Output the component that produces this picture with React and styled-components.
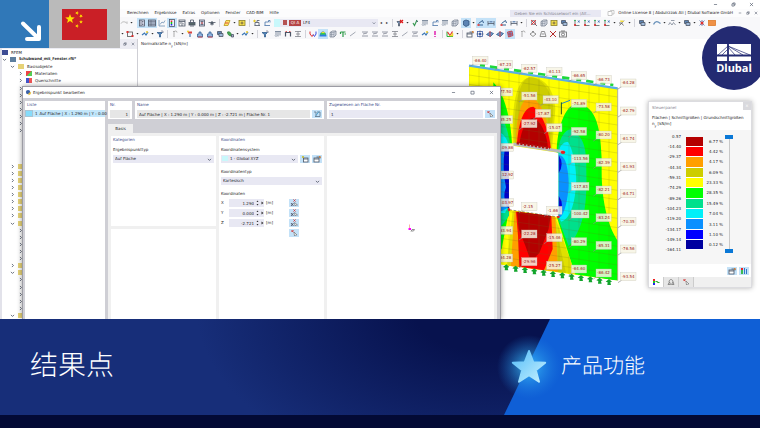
import React from "react";
import styled, { createGlobalStyle, css } from "styled-components";

const colors = {
  ink: "#1c1c26",
  muted: "#85858f",
  heading: "#3a4a88",
  field: "#e8e8f3",
  readonly: "#e6e6e6",
  highlight: "#c4e2f8",
  chrome: "#cfcfd5",
  surface: "#f0f0f0",
  bar: "#f8f8fa",
  folder: "#e6d277",
  navy: "#232a72"
};

const GlobalStyle = createGlobalStyle`
  *, *::before, *::after { box-sizing: border-box; }
  body { margin: 0; }
  body, button, input, select {
    font-family: "DejaVu Sans", "Noto Sans CJK SC", sans-serif;
    font-size: 4px;
    line-height: 6px;
    color: ${colors.ink};
    text-rendering: geometricPrecision;
  }
  button, input, select { margin: 0; padding: 0; border: 0; border-radius: 0; }
  a { color: inherit; text-decoration: none; }
`;

const Page = styled.div`
  display: flex;
  flex-direction: column;
  min-height: 100vh;
  overflow: hidden;
  background: #fff;
`;

const Stage = styled.div`
  position: relative;
  flex: 1;
  display: flex;
  flex-direction: column;
  overflow: hidden;
`;

/* ---------- icons ---------- */

const Icon = styled.svg`
  display: block;
  flex: none;
  width: ${p => p.$size || 8}px;
  height: ${p => p.$size || 8}px;
  fill: none;
  stroke: #4c5566;
  stroke-width: 1.6;
`;

const glyphs = {
  undo: <path d="M2 9c2-4 8-5 12 0M14 9V5" stroke="#aaa" />,
  panel: (
    <>
      <rect x="3" y="2" width="10" height="12" fill="#eef" />
      <path d="M6 2v12M8 5h3M8 8h3M8 11h3" />
    </>
  ),
  table: (
    <>
      <rect x="1" y="2" width="14" height="12" fill="#b9c6dc" />
      <path d="M1 5h14M1 8h14M1 11h14M6 2v12" strokeWidth="1" />
    </>
  ),
  chart: <path d="M2 2v12h12M4 11l4-5 3 2 3-5" stroke="#6d8fb3" />,
  legend: (
    <>
      <rect x="3" y="1" width="10" height="14" fill="#eef" />
      <path d="M7 3v3" stroke="#e22" strokeWidth="3" />
      <path d="M7 6v4" stroke="#1c1" strokeWidth="3" />
      <path d="M7 10v3" stroke="#22e" strokeWidth="3" />
    </>
  ),
  report: (
    <>
      <rect x="2" y="2" width="12" height="12" />
      <path d="M2 5h12M4 8h5l3 3M6 12h4" />
    </>
  ),
  print: (
    <>
      <rect x="2" y="7" width="12" height="5" fill="#566" />
      <path d="M5 7V2h6v5M4 14h8" />
    </>
  ),
  book: (
    <>
      <rect x="3" y="2" width="10" height="12" fill="#dde" />
      <path d="M5 5h6M5 11h6" />
      <circle cx="8" cy="8" r="1" fill="#a33" stroke="#a33" />
    </>
  ),
  drone: (
    <>
      <path d="M1 7h14M4 10h8M8 4v9" />
      <circle cx="8" cy="8" r="2" fill="#566" />
    </>
  ),
  pencil: (
    <>
      <path d="M2 13L6 3h8l-4 10z" fill="#ffe36b" stroke="#b99a1c" />
      <path d="M4 8h7" stroke="#d33" />
    </>
  ),
  yellow: (
    <>
      <rect x="2" y="3" width="12" height="10" fill="#f5e04c" stroke="#8b7f2a" />
      <path d="M5 8h6M8 5v6" stroke="#654" />
    </>
  ),
  newCase: (
    <>
      <path d="M3 13h11M4 13V7h8v6M8 7V3h5" />
      <circle cx="3" cy="4" r="1.6" fill="#f0d020" stroke="#e0c010" />
    </>
  ),
  editCase: <path d="M3 13h11M4 13V6M4 6h7V3h3v4" stroke="#4a74a8" />,
  funnelX: (
    <>
      <path d="M2 5h8l-3 4v5H5V9z" fill="#7aa6d0" />
      <path d="M8 2l6 6M14 2L8 8" stroke="#e01818" strokeWidth="2.4" />
    </>
  ),
  funnel: (
    <>
      <path d="M2 5h11L9 9v5H7V9z" fill="#4f84bb" stroke="#35608f" />
      <path d="M10 2h4v4" stroke="#889" />
    </>
  ),
  loads: <path d="M2 3h12M4 3v8M8 3v10M12 3v8M2 11l2 2 2-2" stroke="#6b7a8f" />,
  check: (
    <>
      <path d="M4 8l3 5 5-11" stroke="#3a9a55" strokeWidth="2.4" />
      <path d="M11 3l3 3" stroke="#346" />
    </>
  ),
  box: (
    <>
      <path d="M2 5l5-3h7v8l-4 4H2z" fill="#d5d9e2" stroke="#7d8796" />
      <path d="M2 5h8v9M10 5l4-3M5 5v9M2 9h8" stroke="#7d8796" strokeWidth="1" />
    </>
  ),
  cube: <path d="M3 4l5-2 6 2v8l-6 3-5-3z" fill="#5c84b4" stroke="#35557f" />,
  node: (
    <>
      <path d="M3 12h9M3 9l8-6 2 5" stroke="#35608f" strokeWidth="2" />
      <rect x="1" y="10" width="4" height="4" fill="#e05050" stroke="none" />
    </>
  ),
  dims: (
    <>
      <path d="M2 4v9M14 4v9M2 9h12" />
      <path d="M5 4h6v3H5z" fill="#6f8fb8" stroke="none" />
    </>
  ),
  zoomX: (
    <>
      <circle cx="7" cy="7" r="4" />
      <path d="M10 10l4 4" />
      <path d="M2 2l10 9M12 2L2 12" stroke="#e01818" />
    </>
  ),
  axis: (
    <>
      <path d="M4 3v10h9" stroke="#566" />
      <circle cx="4" cy="3" r="1.6" fill="#18a33b" stroke="none" />
      <circle cx="4" cy="12" r="2" fill="#e02020" stroke="none" />
      <path d="M10 3l3 4M13 3l-3 4" stroke="#2a5fb0" />
    </>
  ),
  brush: (
    <>
      <path d="M3 13L12 3M2 8h5l4 5" stroke="#555" />
      <path d="M4 3h6l2 3H5z" fill="#f2dd3d" stroke="none" />
    </>
  ),
  views: (
    <>
      <path d="M3 3h8v6H3z" fill="#5c84b4" />
      <path d="M6 7h8v6H6z" fill="#9fb9d9" />
    </>
  ),
  curve: <path d="M1 11c4-9 9-6 14-2" stroke="#6b93bb" strokeWidth="2.6" />,
  tents: <path d="M1 12l3-5 4 5 3-5 4 5M6 3h7" stroke="#7d8796" />,
  atom: (
    <>
      <path d="M3 3l10 10M13 3L3 13M8 2v12" stroke="#5572ab" />
      <circle cx="8" cy="8" r="3" fill="#dd3333" stroke="none" />
    </>
  ),
  orange: <rect x="1" y="3" width="14" height="10" fill="#ef9146" stroke="#de7a2a" />,
  frame: (
    <>
      <rect x="3" y="4" width="10" height="9" stroke="#555" />
      <path d="M1 2h4v4H1zM11 10h4v4h-4z" fill="#d83030" stroke="none" />
    </>
  ),
  spark: (
    <>
      <path d="M2 10l5-4 3 4 4-6" stroke="#3d78b5" strokeWidth="2.4" />
      <circle cx="12" cy="4" r="2" fill="#efcb2b" stroke="none" />
    </>
  ),
  hook: <path d="M6 14V5a3 3 0 0 1 6 0M4 3h3" stroke="#999" />,
  arrowRed: (
    <>
      <path d="M8 14V7" stroke="#4776aa" strokeWidth="2.4" />
      <path d="M4 3h8v4H4z" fill="#d94141" stroke="none" />
      <circle cx="4" cy="3" r="2" fill="#f0d020" stroke="none" />
    </>
  ),
  stack: (
    <>
      <path d="M3 14V8h3V4h4v4h3v6z" fill="#8fb2dd" stroke="#3a6497" />
      <path d="M4 14h9" stroke="#d33" />
    </>
  ),
  leaf: (
    <>
      <path d="M3 4c6-2 8 4 8 8-5 0-8-3-8-8z" fill="#48a857" stroke="#2e7f3b" />
      <path d="M11 9h4v5h-4z" fill="#aac" />
    </>
  ),
  beam: <path d="M2 3h12M2 13h12M8 3v10M4 8h8" stroke="#80838c" />,
  hinge: (
    <>
      <path d="M3 13V5h10v8" strokeWidth="2.4" />
      <path d="M3 3h3M10 3h3" stroke="#d33" />
    </>
  ),
  forces: (
    <>
      <path d="M2 3v5l4 5 3-4" stroke="#e02828" strokeWidth="2" />
      <path d="M8 9l3 4 3-5V3" stroke="#3b4fe0" strokeWidth="2" />
    </>
  ),
  rainbow: (
    <>
      <path d="M1 13c0-5 3-10 7-10s7 5 7 10z" fill="#2c7fe0" stroke="none" />
      <path d="M2 9c3-6 9-6 12 0z" fill="#3ccf42" stroke="none" />
      <path d="M4 6c3-4 6-4 8 0z" fill="#efdf2e" stroke="none" />
    </>
  ),
  greenT: <path d="M3 4h10M8 3v11M3 4v4M11 8h3" stroke="#2d9a48" strokeWidth="2.4" />,
  slash: <path d="M2 12L13 4" stroke="#8d93a0" />,
  lines: <path d="M2 4h12M2 12h12M4 8l8-2" stroke="#7d8392" />,
  pin: <path d="M8 2v8M8 12v2" stroke="#e020b0" strokeWidth="3" />,
  vee: (
    <>
      <path d="M2 3v10h12" stroke="#2fb43c" strokeWidth="2" />
      <path d="M3 4l5 7 5-8" stroke="#e02a2a" strokeWidth="2.4" />
      <path d="M7 11h6V6" stroke="#efd52e" strokeWidth="3" />
    </>
  ),
  target: (
    <>
      <rect x="3" y="3" width="10" height="10" stroke="#3f5fa8" />
      <circle cx="8" cy="8" r="3" fill="#3f5fa8" stroke="none" />
      <path d="M8 1v3M8 12v3M1 8h3M12 8h3" />
    </>
  ),
  slab: (
    <>
      <path d="M1 9l7-5 7 3-6 6z" fill="#6d95c8" stroke="#35608f" />
      <path d="M8 2v12" stroke="#d33" />
    </>
  ),
  mesh: (
    <>
      <path d="M3 4l9-2 2 9-9 3z" fill="#7396d8" stroke="#c33" />
      <path d="M8 3v10M4 8h9" stroke="#c33" />
    </>
  ),
  ring: <path d="M8 4l6 4-6 5-6-5zM6 3h4" stroke="#777" />,
  cone: <path d="M5 3h6l3 10H2zM5 8h6" stroke="#777" />,
  cross: <path d="M2 2l12 12M14 2L2 14" stroke="#b52b2b" strokeWidth="2" />,
  camera: (
    <>
      <rect x="1" y="4" width="14" height="10" stroke="#666" />
      <circle cx="8" cy="9" r="3" stroke="#666" />
      <path d="M4 2h8" stroke="#666" />
    </>
  ),
  open: <path d="M2 13V5h8v8zM5 5l2-2h7v7h-4" fill="#fff" stroke="#999" strokeWidth="1" />,
  newItem: (
    <>
      <rect x="5" y="6" width="9" height="8" fill="#fff" />
      <path d="M5 8h9" />
      <path d="M2 2l4 4M6 2L2 6" stroke="#c6b92a" />
    </>
  ),
  editItem: (
    <>
      <rect x="2" y="6" width="10" height="8" fill="#fff" />
      <path d="M2 8h10M7 4h7v3" />
      <path d="M12 3h2v3" stroke="#d0803a" strokeWidth="2.4" />
    </>
  ),
  rename: (
    <>
      <path d="M2 4h4v9M8 4h6v9H4" stroke="#5d7488" />
      <path d="M6 11l6-8" stroke="#3a9acb" />
    </>
  ),
  pick: (
    <>
      <path d="M8 6l1 8 2-2 3 0z" fill="#fff" stroke="#666" strokeWidth="1.2" />
      <path d="M3 3l4 3M7 2L3 6" stroke="#d23a3a" strokeWidth="2" />
    </>
  ),
  pickAxis: (
    <>
      <path d="M9 7l1 7 2-2 3 0z" fill="#fff" stroke="#666" strokeWidth="1.2" />
      <path d="M2 8l5 6M7 8l-5 6" stroke="#445" strokeWidth="1.6" />
      <path d="M7 1l4 4M11 1L7 5" stroke="#d23a3a" strokeWidth="2" />
    </>
  ),
  scale: (
    <>
      <path d="M4 2v4" stroke="#e22" strokeWidth="4" />
      <path d="M4 6v4" stroke="#2c2" strokeWidth="4" />
      <path d="M4 10v4" stroke="#22e" strokeWidth="4" />
      <path d="M7 7h3l2 2h3" stroke="#3a3" strokeWidth="2.4" />
    </>
  ),
  balance: <path d="M2 13h5L5 8zM9 13h5l-2-5zM4 8c0-3 2-5 4-5s4 2 4 5" stroke="#777" />,
  bars: (
    <>
      <path d="M4 2v12" stroke="#3cba54" strokeWidth="4" />
      <path d="M9 2v12M13 4v10" stroke="#2f78c8" strokeWidth="2" />
      <path d="M4 2v4" stroke="#e22" strokeWidth="4" />
    </>
  )
};

const Glyph = ({ name, size }) => (
  <Icon viewBox="0 0 16 16" $size={size} aria-hidden="true">
    {glyphs[name]}
  </Icon>
);

const chevronPaths = {
  down: "M3 6l5 5 5-5",
  right: "M6 3l5 5-5 5"
};

const Chevron = ({ dir = "down", size = 5 }) => (
  <Icon viewBox="0 0 16 16" $size={size} aria-hidden="true">
    <path d={chevronPaths[dir]} strokeWidth="2.6" />
  </Icon>
);

const windowPaths = {
  min: "M3 8h10",
  max: "M3 4h10v9H3z",
  restore: "M3 6h7v7H3zM6 6V3h7v7h-3",
  close: "M3 3l10 10M13 3L3 13"
};

const WindowButton = styled.button`
  display: grid;
  place-items: center;
  width: ${p => p.$width}px;
  background: none;
`;

const WindowGlyph = ({ name, size = 5, width = 18 }) => (
  <WindowButton type="button" aria-label={name} $width={width}>
    <Icon viewBox="0 0 16 16" $size={size}>
      <path d={windowPaths[name]} strokeWidth="2" />
    </Icon>
  </WindowButton>
);

/* ---------- main window ---------- */

const TitleBar = styled.header`
  display: flex;
  justify-content: flex-end;
  height: 9px;
`;

const MenuBar = styled.nav`
  display: flex;
  align-items: center;
  gap: 6px;
  height: 8px;
  padding-left: 127px;
  white-space: nowrap;
  background: #fcfcfd;
`;

const SearchField = styled.input`
  width: 91px;
  height: 7px;
  margin-left: auto;
  padding-left: 4px;
  background: ${colors.field};

  &::placeholder {
    color: ${colors.muted};
    opacity: 1;
  }
`;

const Account = styled.div`
  display: flex;
  align-items: center;
  gap: 3px;
`;

const Toolbar = styled.div`
  display: flex;
  align-items: center;
  height: 11px;
  padding-left: ${p => p.$start}px;
  background: ${colors.bar};
`;

const Tool = styled.button`
  display: grid;
  place-items: center;
  flex: none;
  width: 10px;
  height: 10px;
  background: ${p => (p.$active ? colors.highlight : "none")};
`;

const Caret = styled.span`
  flex: none;
  width: 5px;
  height: 2px;
  background: #333;
  clip-path: polygon(20% 0, 80% 0, 50% 100%);
`;

const Divider = styled.span`
  flex: none;
  width: 1px;
  height: 8px;
  margin: 0 ${p => p.$space}px;
  background: #d3d3da;
`;

const Spacer = styled.span`
  flex: none;
  width: ${p => p.$width}px;
`;

const LoadCase = styled.label`
  display: flex;
  align-items: center;
  flex: none;
  gap: 2px;
  width: 104px;
  height: 8px;
  padding-right: 2px;
  background: linear-gradient(90deg, #c9f8fb 6px, ${colors.field} 6px);
  padding-left: 9px;
`;

const CaseColor = styled.span`
  width: 4px;
  height: 5px;
  background: #b55252;
`;

const CaseTag = styled.span`
  width: 12px;
  color: #fff;
  text-align: center;
  background: #b54545;
`;

const PlainSelect = styled.select`
  flex: 1;
  appearance: none;
  background: none;
`;

const Step = styled.button`
  width: 6px;
  background: none;
`;

// "*name" is a pressed tool, "v" a caret, "|" a divider, a number blank space
const renderTools = items =>
  items.map((item, i) => {
    if (item === "v") return <Caret key={i} />;
    if (item === "|") return <Divider key={i} $space={2} />;
    if (typeof item === "number") return <Spacer key={i} $width={item} />;
    const name = item.replace("*", "");
    return (
      <Tool key={i} type="button" aria-label={name} $active={item !== name}>
        <Glyph name={name} />
      </Tool>
    );
  });

const viewTools = [
  "undo", "v", 3, "*panel", "*table", "chart", "*legend", "report", "print", "book", "drone", "|",
  "pencil", "v", "yellow", "|", "newCase", "editCase", 2
];

const resultTools = [
  "|", "funnelX", "v", "check", "loads", "editCase", "loads", "box", 1, "*cube", "v", "*node", "*dims",
  3, "node", "dims", "v", "|", "zoomX", "box", "yellow", "views", 3, "axis", "axis", "axis", "axis",
  "v", "brush", "v", "|", "views", "v", "curve", "v", "tents", "v", "views", "v", "atom", "orange"
];

const modelTools = [
  "v", "frame", "v", "spark", "v", "funnel", "|", "hook", "v", "arrowRed", "stack", "stack", "views",
  "leaf", "v", "spark", "v", "|", "funnel", 3, "loads", "hinge", "beam", "|", "forces", "*rainbow", "box",
  "greenT", "slash", 2, "lines", "lines", "lines", "beam", "slash", "lines", "spark", "pin", "|",
  "vee", "v", "|", "editItem", "target", "slab", "slab", "*mesh", 3, "hook", "ring", "cone", "cross", "camera"
];

const menus = ["Berechnen", "Ergebnisse", "Extras", "Optionen", "Fenster", "CAD-BIM", "Hilfe"];

const Workspace = styled.main`
  flex: 1;
  display: flex;
  background: #fff;
`;

const Navigator = styled.aside`
  display: flex;
  flex-direction: column;
  width: 138px;
  border-left: 2px solid #e2e2ea;
  border-right: 1px solid ${colors.chrome};
`;

const NavigatorHeader = styled.div`
  display: flex;
  justify-content: flex-end;
  height: 10px;
  background: #ececf3;
`;

const Tree = styled.ul`
  flex: 1;
  display: grid;
  grid-template-rows: repeat(38, 1fr);
  margin: 0;
  padding: 0;
  list-style: none;
`;

const TreeRow = styled.li`
  display: flex;
  align-items: center;
  gap: 3px;
  padding-left: ${p => p.$level * 8}px;

  ${p =>
    p.$bold &&
    css`
      font-family: "Open Sans", sans-serif;
      font-weight: 700;
    `}
`;

const Swatch = styled.span`
  flex: none;
  width: 6px;
  height: 5px;
  background: ${p => p.$color};
`;

const folderRows = new Set([16, 17, 18, 19, 20, 21, 22, 23, 24, 30, 31, 37]);
const openRows = new Set([24, 31, 37]);

const treeHead = [
  { level: 0, text: "RFEM", color: "#3d4c94" },
  { level: 0, text: "Schubwand_mit_Fenster.rf6*", color: "#5d7f9f", dir: "down", bold: true },
  { level: 1, text: "Basisobjekte", color: colors.folder, dir: "down" },
  { level: 2, text: "Materialien", color: "linear-gradient(135deg, #e44 50%, #5c5 50%)", dir: "right" },
  { level: 2, text: "Querschnitte", color: "linear-gradient(90deg, #45c 50%, #e55 50%)", dir: "right" }
];

const treeRows = Array.from({ length: 38 }, (_, i) => {
  if (treeHead[i]) return treeHead[i];
  if (folderRows.has(i)) {
    return { level: 1, color: colors.folder, dir: openRows.has(i) ? "down" : "right" };
  }
  return { level: i > 11 && i < 16 ? 9 : 2, dir: "right" };
});

const Viewport = styled.section`
  position: relative;
  flex: 1;
  padding: 2px 3px;
  overflow: hidden;
`;

const ModelView = styled.svg`
  position: absolute;
  top: 10px;
  right: 115px;
  width: 185px;
  height: 280px;
`;

/* ---------- wall with contour bands ---------- */

const bands = [
  ["#ff0", "M27 50L473 118V695L27 634z"],
  // left of the opening
  ["#0f0", "M100 100C130 130 152 200 156 285L100 278zM100 400H147V484L125 600L100 620z"],
  ["#00e08c", "M100 185C135 200 145 250 150 284L100 280zM100 400H147V500L125 530H100z"],
  ["#00f0f8", "M100 240C130 250 142 270 146 290V470L135 492H100z"],
  ["#0a90ff", "M100 290H147V475L120 488H100z"],
  ["#0000c8", "M134 300H148V480L138 470Q128 440 138 415Q126 360 134 300z"],
  // above the opening
  ["#e0e000", "M160 282C154 180 165 90 210 85C262 86 282 130 286 180L276 300z"],
  ["#cdcd00", "M164 282C158 180 178 86 210 85C250 86 276 130 280 180L272 300z"],
  ["#ff9f00", "M168 282C168 210 182 146 210 145C240 150 268 210 272 297z"],
  ["#f00", "M171 283C176 210 195 173 220 173C240 185 268 240 272 298z"],
  ["#b40000", "M178 284C186 235 200 208 220 207C240 214 260 250 264 296z"],
  // right of the opening
  ["#0f0", "M290 302C294 225 320 165 350 164C400 168 422 215 425 330V360C424 450 442 530 473 575V695L345 676L292 508z"],
  ["#00e08c", "M294 302C300 262 318 240 334 242C372 262 381 300 379 370C382 480 368 540 326 592L294 508z"],
  ["#00f0f8", "M296 305C304 284 316 276 325 280C348 320 352 400 347 420C342 480 324 512 304 518L296 506z"],
  ["#0a90ff", "M296 318C322 318 326 380 326 410C324 450 314 490 302 504H296z"],
  ["#0000d8", "M296 318Q314 345 296 372zM296 440Q316 468 296 500z"],
  // below the opening
  ["#e0e000", "M158 486L140 650L165 654L170 488z"],
  ["#ff9f00", "M164 487L152 652L182 656L172 488z"],
  ["#e0e000", "M285 504L346 675L270 665z"],
  ["#cdcd00", "M280 502L318 672L285 668z"],
  ["#ff9f00", "M272 500L286 503L294 668L250 662z"],
  ["#f00", "M168 488L274 500L278 600L252 664L178 654L174 560z"],
  ["#b40000", "M171 488L272 500L266 540L238 612L226 624H208L196 590L176 540z"]
];

const modelLabels = [
  [38, 22, "-66.40"], [112, 34, "-67.23"], [185, 46, "-62.57"], [260, 56, "-61.13"],
  [334, 68, "-66.65"], [408, 79, "-66.73"], [482, 90, "-64.28"],
  [112, 117, "-77.50"], [185, 129, "-51.56"], [249, 140, "-43.10"], [334, 151, "-74.89"],
  [408, 162, "-73.58"], [482, 174, "-62.79"],
  [112, 200, "-85.25"], [226, 181, "-17.87"], [185, 212, "-27.92"], [260, 224, "-15.07"],
  [334, 235, "-92.58"], [408, 246, "-80.20"], [482, 257, "-61.74"],
  [115, 283, "109.86"], [334, 317, "-113.56"], [408, 328, "-82.39"], [482, 340, "-61.93"],
  [115, 366, "112.92"], [334, 400, "-117.83"], [408, 411, "-82.21"], [482, 422, "-64.71"],
  [115, 449, "103.97"], [185, 461, "-2.15"], [260, 472, "-1.66"], [334, 483, "-100.42"],
  [408, 494, "-83.24"], [482, 506, "-70.35"],
  [112, 532, "-83.94"], [185, 543, "-22.28"], [260, 554, "-15.46"], [334, 566, "-80.29"],
  [408, 577, "-85.31"], [482, 588, "-76.56"],
  [112, 615, "-64.28"], [185, 626, "-29.96"], [260, 637, "-25.27"], [334, 648, "-64.60"],
  [408, 660, "-86.42"], [482, 671, "-93.54"]
];

const WallModel = () => (
  <ModelView viewBox="0 0 555 840" aria-label="Normalkräfte">
    <clipPath id="wall">
      <path d="M27 50L473 118V695L27 634z" />
    </clipPath>
    <g clipPath="url(#wall)">
      {bands.map(([fill, d], i) => (
        <path key={i} d={d} fill={fill} />
      ))}
      <g stroke="#6a6a20" strokeOpacity=".4" strokeWidth="1.4">
        {Array.from({ length: 15 }, (_, i) => (
          <path key={i} d={`M${27 + i * 30} 40V700`} />
        ))}
        {Array.from({ length: 24 }, (_, i) => (
          <path key={i} d={`M27 ${22 + i * 28}l446 66`} />
        ))}
      </g>
    </g>
    <path d="M147 289L295 311V504L147 482z" fill="#fff" />
    <path d="M147 470V482L295 504V490" fill="none" stroke="#333" strokeDasharray="8 5" strokeWidth="1.5" />
    <path d="M160 285L310 308" stroke="#b9b9b9" strokeWidth="9" />
    <path d="M170 282L270 297" stroke="#b01010" strokeWidth="8" strokeDasharray="7 4" />
    <path d="M27 50L473 118" stroke="#59aee6" strokeWidth="7" />
    <path d="M60 48L460 108" stroke="#1fd83c" strokeWidth="8" strokeDasharray="15 15 22 21" />
    <path d="M473 118V695" stroke="#8a8a70" strokeWidth="2" />
    <path d="M304 164L330 154" fill="none" stroke="#28c" strokeWidth="3" />
    <path d="M304 160V196" stroke="#185028" strokeWidth="3" />
    <g fill="#e82020">
      <circle cx="147" cy="482" r="4" />
      <circle cx="295" cy="504" r="4" />
      <ellipse cx="309" cy="310" rx="7" ry="5" />
    </g>
    <g fill="#12a52c">
      {Array.from({ length: 12 }, (_, i) => (
        <path key={i} d={`M${139 + i * 28} ${646 + i * 4}l9 8-5 2 2 8h-11l1-8-6-2z`} />
      ))}
    </g>
    {modelLabels.map(([x, y, text]) => (
      <g key={`${x}-${y}`}>
        <path d={`M${x + 4} ${y + 22}l-12 8`} stroke="#8d8d8d" strokeWidth="2" />
        <rect
          x={x}
          y={y}
          width={text.length > 6 ? 53 : 46}
          height="24"
          fill="#f7f4e4"
          fillOpacity=".85"
          stroke="#c4c0b2"
        />
        <text x={x + 3} y={y + 16} fontSize="12" fill="#a02020">
          {text}
        </text>
      </g>
    ))}
  </ModelView>
);

/* ---------- dialog ---------- */

const Dialog = styled.section`
  position: absolute;
  top: 86px;
  bottom: 0;
  left: 22px;
  right: 259px;
  display: flex;
  flex-direction: column;
  background: ${colors.chrome};
  border: 1px solid #9c9ca4;
  border-bottom: 0;
  box-shadow: 0 0 5px rgba(0, 0, 0, 0.4);
`;

const DialogTitle = styled.header`
  display: flex;
  align-items: center;
  gap: 1px;
  height: 11px;
  padding-left: 2px;
  background: #fff;
`;

const DialogName = styled.h2`
  flex: 1;
  margin: 0;
  font-size: 4px;
  font-weight: 400;
`;

const DialogBody = styled.div`
  flex: 1;
  display: grid;
  grid-template-columns: 80px 1fr;
  gap: 3px;
  padding: 3px 3px 0 2px;
`;

const Panel = styled.div`
  min-width: 0;
  padding: 1px 2px;
  background: #fff;
`;

const PanelTitle = styled.label`
  display: block;
  margin-bottom: ${p => p.$gap || 2}px;
  color: ${colors.heading};
`;

const ListItem = styled.div`
  display: flex;
  gap: 2px;
  height: 7px;
  margin: 0 -2px;
  line-height: 7px;
  white-space: nowrap;
  background: #c3e7fb;
`;

const ListColor = styled.span`
  flex: none;
  width: 8px;
  background: #86dcfb;
  border: 1px solid #a8c4d4;
`;

const DialogMain = styled.div`
  display: flex;
  flex-direction: column;
  min-width: 0;
`;

const HeaderFields = styled.div`
  display: grid;
  grid-template-columns: 24px 189px 1fr;
  gap: 3px;
`;

const FieldRow = styled.div`
  display: flex;
  align-items: center;
  gap: 2px;
  height: 8px;
`;

const fieldStyles = css`
  min-width: 0;
  width: 100%;
  height: 8px;
  padding: 0 2px;
  background: ${p => (p.readOnly ? colors.readonly : colors.field)};
  text-align: ${p => (p.$right ? "right" : "left")};
`;

const TextField = styled.input`
  ${fieldStyles}
`;

const SquareButton = styled.button`
  display: grid;
  place-items: center;
  flex: none;
  width: 10px;
  height: 8px;
  background: ${colors.highlight};
`;

const TabList = styled.div`
  display: flex;
  margin-top: 5px;
`;

const Tab = styled.button`
  width: 25px;
  height: 9px;
  background: ${colors.surface};
`;

const TabPanel = styled.div`
  flex: 1;
  display: grid;
  grid-template-columns: 105px 105px 1fr;
  gap: 3px;
  padding: 3px 3px 0;
  background: ${colors.surface};
`;

const CategoryColumn = styled.div`
  display: grid;
  grid-template-rows: 90px 1fr;
  gap: 3px;
`;

const FormGroup = styled.div`
  margin-bottom: 6px;
`;

const FieldLabel = styled.label`
  display: block;
  margin-bottom: 2px;
`;

const SelectWrap = styled.div`
  position: relative;
  flex: 1;

  select {
    ${fieldStyles}
    display: block;
    padding-left: ${p => (p.$swatch ? 9 : 2)}px;
    appearance: none;
  }

  svg {
    position: absolute;
    top: 2px;
    right: 2px;
  }

  span {
    position: absolute;
    top: 1px;
    left: 1px;
  }
`;

const Select = ({ id, value, swatch }) => (
  <SelectWrap $swatch={swatch}>
    <select id={id}>
      <option>{value}</option>
    </select>
    {swatch && <Swatch $color={swatch} />}
    <Chevron />
  </SelectWrap>
);

const CoordinateRow = styled.div`
  display: grid;
  grid-template-columns: 6px 35px 21px 10px;
  align-items: center;
  gap: 2px;
  height: 8px;
  margin-bottom: 2px;

  ${SquareButton} {
    grid-column: 4;
  }
`;

const CoordinateInput = styled.div`
  display: flex;
  align-items: center;
  background: ${colors.field};
`;

const Preview = styled(Panel)`
  display: grid;
  place-items: center;
`;

const coordinates = [
  ["X", "1.290"],
  ["Y", "0.000"],
  ["Z", "-2.721"]
];

const ResultPointDialog = () => (
  <Dialog role="dialog" aria-label="Ergebnispunkt bearbeiten">
    <DialogTitle>
      <Icon viewBox="0 0 16 16" $size={7}>
        <circle cx="7" cy="7" r="5" fill="#3b62a8" stroke="none" />
        <path d="M8 14c4 0 6-3 6-7l-6 2z" fill="#e7bf3a" stroke="none" />
      </Icon>
      <DialogName>Ergebnispunkt bearbeiten</DialogName>
      <WindowGlyph name="min" />
      <WindowGlyph name="max" />
      <WindowGlyph name="close" />
    </DialogTitle>
    <DialogBody>
      <Panel>
        <PanelTitle as="div">Liste</PanelTitle>
        <ListItem>
          <ListColor />
          <span>1</span>
          <span>Auf Fläche | X : 1.290 m | Y : 0.00</span>
        </ListItem>
      </Panel>
      <DialogMain>
        <HeaderFields>
          <Panel>
            <PanelTitle htmlFor="number">Nr.</PanelTitle>
            <TextField id="number" readOnly $right value="1" />
          </Panel>
          <Panel>
            <PanelTitle htmlFor="name">Name</PanelTitle>
            <FieldRow>
              <TextField
                id="name"
                readOnly
                value="Auf Fläche | X : 1.290 m | Y : 0.000 m | Z : -2.721 m | Fläche Nr. 1"
              />
              <SquareButton type="button" aria-label="Name bearbeiten">
                <Glyph name="rename" />
              </SquareButton>
            </FieldRow>
          </Panel>
          <Panel>
            <PanelTitle htmlFor="surface">Zugewiesen an Fläche Nr.</PanelTitle>
            <FieldRow>
              <TextField id="surface" defaultValue="1" />
              <SquareButton type="button" aria-label="Fläche wählen">
                <Glyph name="pick" />
              </SquareButton>
            </FieldRow>
          </Panel>
        </HeaderFields>
        <TabList role="tablist">
          <Tab type="button" role="tab" aria-selected="true">
            Basis
          </Tab>
        </TabList>
        <TabPanel role="tabpanel">
          <CategoryColumn>
            <Panel>
              <PanelTitle as="div" $gap={4}>
                Kategorien
              </PanelTitle>
              <FieldLabel htmlFor="pointType">Ergebnispunkttyp</FieldLabel>
              <Select id="pointType" value="Auf Fläche" />
            </Panel>
            <Panel />
          </CategoryColumn>
          <Panel>
            <PanelTitle as="div" $gap={4}>
              Koordinaten
            </PanelTitle>
            <FormGroup>
              <FieldLabel htmlFor="system">Koordinatensystem</FieldLabel>
              <FieldRow>
                <Select id="system" value="1 - Global XYZ" swatch="#c9f8fb" />
                <SquareButton type="button" aria-label="Neu">
                  <Glyph name="newItem" />
                </SquareButton>
                <SquareButton type="button" aria-label="Bearbeiten">
                  <Glyph name="editItem" />
                </SquareButton>
              </FieldRow>
            </FormGroup>
            <FormGroup>
              <FieldLabel htmlFor="systemType">Koordinatentyp</FieldLabel>
              <Select id="systemType" value="Kartesisch" />
            </FormGroup>
            <FieldLabel as="div">Koordinaten</FieldLabel>
            {coordinates.map(([axis, value]) => (
              <CoordinateRow key={axis}>
                <label htmlFor={axis}>{axis}</label>
                <CoordinateInput>
                  <TextField id={axis} $right defaultValue={value} />
                  <Icon viewBox="0 0 16 16" $size={8}>
                    <path d="M1 6l2-3 2 3zM1 10l2 3 2-3zM11 5l4 3-4 3z" fill="#333" stroke="none" />
                  </Icon>
                </CoordinateInput>
                <span>[m]</span>
                <SquareButton type="button" aria-label={`${axis} wählen`}>
                  <Glyph name="pickAxis" />
                </SquareButton>
              </CoordinateRow>
            ))}
            <CoordinateRow>
              <SquareButton type="button" aria-label="Punkt wählen">
                <Glyph name="pick" />
              </SquareButton>
            </CoordinateRow>
          </Panel>
          <Preview>
            <Icon viewBox="0 0 16 16">
              <path d="M5 1v8" stroke="#f3a08a" />
              <path d="M3 8h5v4H3z" fill="#f0f" stroke="none" />
              <path d="M8 15l2-4h5l-2 3h-4" stroke="#777" />
            </Icon>
          </Preview>
        </TabPanel>
      </DialogMain>
    </DialogBody>
  </Dialog>
);

/* ---------- control panel ---------- */

const ControlPanel = styled.section`
  position: absolute;
  top: 101px;
  right: 8px;
  width: 104px;
  background: ${colors.surface};
  border: 1px solid #dcdce0;
  box-shadow: 0 0 5px rgba(0, 0, 0, 0.3);
`;

const ControlHeader = styled.header`
  display: flex;
  justify-content: space-between;
  height: 12px;
  padding-left: 3px;
  line-height: 11px;
  color: ${colors.muted};
  background: #fff;
`;

const ControlClose = styled.button`
  width: 8px;
  height: 8px;
  color: #fff;
  background: #d9d9dd;
`;

const ControlSubtitle = styled.p`
  margin: 0;
  padding: 1px 3px 3px;
  white-space: nowrap;
  background: #fff;
`;

const Subscript = styled.sub`
  font-size: 3px;
  line-height: 0;
`;

const Legend = styled.div`
  display: flex;
  align-items: center;
  height: 134px;
  padding-bottom: 7px;
  background: #f6f6f6;
`;

const LegendColumn = styled.div`
  display: grid;
  grid-auto-rows: 1fr;
  align-items: center;
  width: ${p => p.$width}px;
  height: ${p => p.$height}px;
  margin-right: ${p => p.$gap}px;
  text-align: right;
`;

const LegendColor = styled.span`
  height: 100%;
  background: ${p => p.$color};
  border-bottom: 1px solid #fff;
`;

const RangeTrack = styled.div`
  display: grid;
  width: 10px;
  height: 118px;
  background: linear-gradient(#c8c8c8, #c8c8c8) center / 1px 100% no-repeat;
`;

const RangeHandle = styled.input`
  grid-area: 1 / 1;
  width: 8px;
  height: 118px;
  justify-self: center;
  appearance: none;
  background: none;
  pointer-events: none;
  writing-mode: vertical-lr;
  direction: rtl;

  &::-webkit-slider-thumb {
    width: 8px;
    height: 4px;
    appearance: none;
    background: #0a78d6;
    pointer-events: auto;
  }
`;

const ControlActions = styled.div`
  display: flex;
  align-items: center;
  justify-content: flex-end;
  gap: 2px;
  height: 13px;
  padding-right: 2px;
  background: #fff;
`;

const ControlTabs = styled.div`
  display: flex;
  height: 10px;
`;

const ControlTab = styled.button`
  display: grid;
  place-items: center;
  width: 15px;
  background: ${p => (p.$active ? "#fff" : "#e6e6e6")};
  border-right: 1px solid #ccc;
`;

const legendValues = [
  "0.57", "-14.40", "-29.37", "-44.34", "-59.31", "-74.29",
  "-89.26", "-104.23", "-119.20", "-134.17", "-149.14", "-164.11"
];

const legendBands = [
  ["#b40000", "6.77 %"],
  ["#f00", "4.42 %"],
  ["#ff9f00", "4.17 %"],
  ["#cdcd00", "6.09 %"],
  ["#ff0", "23.33 %"],
  ["#0f0", "28.35 %"],
  ["#00e08c", "15.49 %"],
  ["#00f0f8", "7.04 %"],
  ["#0a90ff", "3.11 %"],
  ["#00f", "1.10 %"],
  ["#0000a0", "0.12 %"]
];

const ResultPanel = () => (
  <ControlPanel>
    <ControlHeader>
      Steuerpanel
      <ControlClose type="button" aria-label="Schließen">
        ×
      </ControlClose>
    </ControlHeader>
    <ControlSubtitle>
      Flächen | Schnittgrößen | Grundschnittgrößen
      <br />n<Subscript>y</Subscript> [kN/m]
    </ControlSubtitle>
    <Legend>
      <LegendColumn $width={32} $height={124} $gap={5}>
        {legendValues.map(value => (
          <span key={value}>{value}</span>
        ))}
      </LegendColumn>
      <LegendColumn $width={17} $height={114} $gap={1}>
        {legendBands.map(([color]) => (
          <LegendColor key={color} $color={color} />
        ))}
      </LegendColumn>
      <LegendColumn $width={19} $height={114} $gap={1}>
        {legendBands.map(([color, share]) => (
          <span key={color}>{share}</span>
        ))}
      </LegendColumn>
      <RangeTrack>
        <RangeHandle type="range" aria-label="Maximum" defaultValue="100" />
        <RangeHandle type="range" aria-label="Minimum" defaultValue="0" />
      </RangeTrack>
    </Legend>
    <ControlActions>
      <SquareButton type="button" aria-label="Bearbeiten">
        <Glyph name="editItem" />
      </SquareButton>
      <SquareButton type="button" aria-label="Skala">
        <Glyph name="bars" />
      </SquareButton>
    </ControlActions>
    <ControlTabs>
      <ControlTab type="button" aria-label="Farbskala" $active>
        <Glyph name="scale" />
      </ControlTab>
      <ControlTab type="button" aria-label="Faktoren">
        <Glyph name="balance" />
      </ControlTab>
      <ControlTab type="button" aria-label="Filter">
        <Glyph name="pick" />
      </ControlTab>
    </ControlTabs>
  </ControlPanel>
);

/* ---------- badges and banner ---------- */

const CornerBadges = styled.div`
  position: absolute;
  top: 0;
  left: 0;
  display: flex;
  height: 48px;
`;

const ArrowBadge = styled.div`
  width: 49px;
  background: #3078b8;
`;

const FlagBadge = styled.div`
  display: grid;
  place-items: center;
  width: 71px;
  background: #bababa;
`;

const BrandBadge = styled.a`
  position: absolute;
  top: 26px;
  right: -6px;
  display: flex;
  flex-direction: column;
  align-items: center;
  width: 64px;
  height: 64px;
  padding-top: 18px;
  font-family: "Open Sans", sans-serif;
  font-size: 11px;
  font-weight: 700;
  line-height: 15px;
  color: #fff;
  background: ${colors.navy};
  border-radius: 50%;
`;

const Banner = styled.footer`
  position: relative;
  display: flex;
  align-items: center;
  justify-content: space-between;
  height: 109px;
  padding: 0 0 6px 30px;
  color: #fff;
  background: radial-gradient(ellipse 290px 170px at 64% -10%, #07124e 25%, #172e79 100%);
  border-bottom: 13px solid #030a35;
`;

const BannerTitle = styled.h1`
  margin: 0;
  font-family: "Noto Sans CJK SC", sans-serif;
  font-size: 28px;
  font-weight: 300;
  line-height: 40px;
`;

const Category = styled.div`
  position: absolute;
  top: 0;
  bottom: 0;
  right: 0;
  display: flex;
  align-items: center;
  width: 256px;
  padding: 0 0 4px 57px;
  font-family: "Noto Sans CJK SC", sans-serif;
  font-size: 21px;
  font-weight: 300;
  background: #0f5fd6;
  clip-path: polygon(46px 0, 100% 0, 100% 100%, 0 100%);
`;

const StarBadge = styled.svg`
  position: absolute;
  top: 4px;
  right: 187px;
  width: 88px;
  height: 88px;
`;

const star = (cx, cy, r, turn = 0) =>
  Array.from({ length: 10 }, (_, i) => {
    const radius = i % 2 ? r * 0.42 : r;
    const angle = ((i * 36 - 90 + turn) * Math.PI) / 180;
    return `${cx + radius * Math.cos(angle)},${cy + radius * Math.sin(angle)}`;
  }).join(" ");

const App = () => (
  <Page>
    <GlobalStyle />
    <Stage>
      <TitleBar>
        <WindowGlyph name="min" />
        <WindowGlyph name="restore" />
        <WindowGlyph name="close" />
      </TitleBar>
      <MenuBar>
        {menus.map(menu => (
          <a key={menu} href="#menu">
            {menu}
          </a>
        ))}
        <SearchField aria-label="Suche" placeholder="Geben Sie ein Schlüsselwort ein (Alt..." />
        <Account>
          <Glyph name="open" />
          Online License 8 | Abdulrzzak Ali | Dlubal Software GmbH
          <div style={{ display: "flex" }}>
            <WindowGlyph name="min" size={4} width={8} />
            <WindowGlyph name="restore" size={4} width={8} />
            <WindowGlyph name="close" size={4} width={8} />
          </div>
        </Account>
      </MenuBar>
      <Toolbar $start={119}>
        {renderTools(viewTools)}
        <LoadCase>
          <CaseColor />
          <CaseTag>QI A</CaseTag>
          <PlainSelect aria-label="Lastfall">
            <option>LF4</option>
          </PlainSelect>
          <Chevron size={4} />
        </LoadCase>
        <Step type="button">◂</Step>
        <Step type="button">▸</Step>
        {renderTools(resultTools)}
      </Toolbar>
      <Toolbar $start={120}>{renderTools(modelTools)}</Toolbar>
      <Workspace>
        <Navigator>
          <NavigatorHeader>
            <WindowGlyph name="restore" size={4} width={8} />
            <WindowGlyph name="close" size={4} width={8} />
          </NavigatorHeader>
          <Tree>
            {treeRows.map((row, i) => (
              <TreeRow key={i} $level={row.level} $bold={row.bold}>
                {row.dir && <Chevron dir={row.dir} />}
                {row.color && <Swatch $color={row.color} />}
                {row.text}
              </TreeRow>
            ))}
          </Tree>
        </Navigator>
        <Viewport>
          Normalkräfte n<Subscript>y</Subscript> [kN/m]
          <WallModel />
        </Viewport>
      </Workspace>
      <ResultPointDialog />
      <ResultPanel />
      <CornerBadges>
        <ArrowBadge>
          <svg width="49" height="48" fill="none" stroke="#fff" strokeWidth="4" strokeLinecap="round">
            <path d="M23 23.500L38 38M39 27V39H27" strokeLinejoin="round" />
          </svg>
        </ArrowBadge>
        <FlagBadge>
          <svg width="45" height="31" fill="#ffde00">
            <rect width="45" height="31" fill="#ca1f26" />
            <polygon points={star(8, 10, 5)} />
            <polygon points={star(15, 4, 2, 20)} />
            <polygon points={star(19, 7, 2, 40)} />
            <polygon points={star(19, 13, 2)} />
            <polygon points={star(15, 17, 2, 20)} />
          </svg>
        </FlagBadge>
      </CornerBadges>
      <BrandBadge href="#dlubal">
        <svg width="34" height="17" viewBox="0 0 34 17">
          <rect width="34" height="17" fill="#fff" />
          <path d="M0 11.500H34M11 0V17" stroke={colors.navy} strokeWidth="1.800" fill="none" />
          <path
            d="M1 11L11 2L33 11M5 11L11 5M11 2L26 11M11 3L18 11"
            stroke={colors.navy}
            strokeWidth=".7"
            fill="none"
          />
        </svg>
        Dlubal
      </BrandBadge>
    </Stage>
    <Banner>
      <BannerTitle>结果点</BannerTitle>
      <Category>产品功能</Category>
      <StarBadge viewBox="0 0 88 88">
        <defs>
          <radialGradient id="glow">
            <stop offset="0" stopColor="#3fc4ff" stopOpacity=".9" />
            <stop offset=".45" stopColor="#2fa4ee" stopOpacity=".5" />
            <stop offset="1" stopColor="#1f80e0" stopOpacity="0" />
          </radialGradient>
          <linearGradient id="shine" x1="0" y1="0" x2="1" y2="1">
            <stop offset="0" stopColor="#56bdf8" />
            <stop offset="1" stopColor="#c4f0ff" />
          </linearGradient>
        </defs>
        <circle cx="44" cy="44" r="32" fill="url(#glow)" />
        <polygon points={star(44, 45, 17)} fill="url(#shine)" stroke="url(#shine)" strokeWidth="2" strokeLinejoin="round" />
      </StarBadge>
    </Banner>
  </Page>
);

export default App;
